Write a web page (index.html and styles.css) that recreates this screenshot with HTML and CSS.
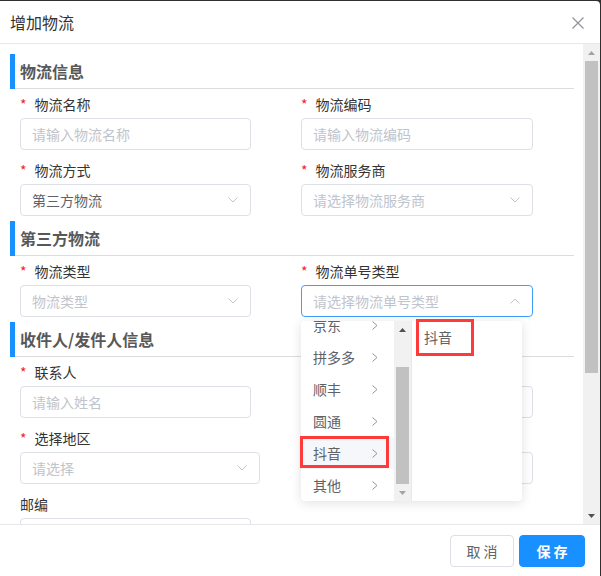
FILE: index.html
```html
<!DOCTYPE html>
<html lang="zh-CN">
<head>
<meta charset="utf-8">
<title>增加物流</title>
<link rel="stylesheet" href="styles.css">
</head>
<body>
<div class="modal">
  <div class="modal-header">
    <span class="modal-title">增加物流</span>
    <svg class="close" width="12" height="12" viewBox="0 0 12 12"><path d="M0.5 0.5L11.5 11.5M11.5 0.5L0.5 11.5" stroke="#909399" stroke-width="1.2" fill="none"/></svg>
  </div>
  <div class="modal-body">
    <div class="scroll-content">
      <section class="section">
        <div class="section-head"><span class="bar"></span><h3 class="section-title">物流信息</h3></div>
        <div class="row">
          <div class="item">
            <div class="label req">物流名称</div>
            <div class="input w230"><span class="ph">请输入物流名称</span></div>
          </div>
          <div class="item">
            <div class="label req">物流编码</div>
            <div class="input w231"><span class="ph">请输入物流编码</span></div>
          </div>
        </div>
        <div class="row">
          <div class="item">
            <div class="label req">物流方式</div>
            <div class="input select w230"><span class="val">第三方物流</span>
              <svg class="chev" width="10" height="6" viewBox="0 0 10 6"><path d="M0.5 0.5L5 5L9.5 0.5" stroke="#c0c4cc" fill="none"/></svg></div>
          </div>
          <div class="item">
            <div class="label req">物流服务商</div>
            <div class="input select w231"><span class="ph">请选择物流服务商</span>
              <svg class="chev" width="10" height="6" viewBox="0 0 10 6"><path d="M0.5 0.5L5 5L9.5 0.5" stroke="#c0c4cc" fill="none"/></svg></div>
          </div>
        </div>
      </section>
      <section class="section">
        <div class="section-head"><span class="bar"></span><h3 class="section-title">第三方物流</h3></div>
        <div class="row">
          <div class="item">
            <div class="label req">物流类型</div>
            <div class="input select w230"><span class="ph">物流类型</span>
              <svg class="chev" width="10" height="6" viewBox="0 0 10 6"><path d="M0.5 0.5L5 5L9.5 0.5" stroke="#c0c4cc" fill="none"/></svg></div>
          </div>
          <div class="item">
            <div class="label req">物流单号类型</div>
            <div class="input select focus w231"><span class="ph">请选择物流单号类型</span>
              <svg class="chev" width="10" height="6" viewBox="0 0 10 6"><path d="M0.5 5.5L5 1L9.5 5.5" stroke="#c0c4cc" fill="none"/></svg></div>
          </div>
        </div>
      </section>
      <section class="section">
        <div class="section-head"><span class="bar"></span><h3 class="section-title">收件人/发件人信息</h3></div>
        <div class="row">
          <div class="item">
            <div class="label req">联系人</div>
            <div class="input w230"><span class="ph">请输入姓名</span></div>
          </div>
          <div class="item">
            <div class="label"></div>
            <div class="input w231"></div>
          </div>
        </div>
        <div class="row">
          <div class="item">
            <div class="label req">选择地区</div>
            <div class="input select w239"><span class="ph">请选择</span>
              <svg class="chev" width="10" height="6" viewBox="0 0 10 6"><path d="M0.5 0.5L5 5L9.5 0.5" stroke="#c0c4cc" fill="none"/></svg></div>
          </div>
          <div class="item">
            <div class="label"></div>
            <div class="input w231"></div>
          </div>
        </div>
        <div class="row">
          <div class="item">
            <div class="label">邮编</div>
            <div class="input w230"></div>
          </div>
        </div>
      </section>
    </div>
    <div class="vscroll">
      <div class="sbtn"><svg width="7" height="4" viewBox="0 0 7 4"><path d="M0 4L3.5 0L7 4Z" fill="#a3a3a3"/></svg></div>
      <div class="strack"><div class="thumb main-thumb"></div></div>
      <div class="sbtn"><svg width="7" height="4" viewBox="0 0 7 4"><path d="M0 0L7 0L3.5 4Z" fill="#505050"/></svg></div>
    </div>
  </div>
  <div class="modal-footer">
    <button class="btn btn-default">取 消</button>
    <button class="btn btn-primary">保 存</button>
  </div>

  <div class="cascader">
    <div class="panel panel-first">
      <ul class="menu-list">
        <li class="menu-item">京东<svg class="arr" width="6" height="9" viewBox="0 0 6 9"><path d="M0.5 0.5L5 4.5L0.5 8.5" stroke="#909399" fill="none"/></svg></li>
        <li class="menu-item">拼多多<svg class="arr" width="6" height="9" viewBox="0 0 6 9"><path d="M0.5 0.5L5 4.5L0.5 8.5" stroke="#909399" fill="none"/></svg></li>
        <li class="menu-item">顺丰<svg class="arr" width="6" height="9" viewBox="0 0 6 9"><path d="M0.5 0.5L5 4.5L0.5 8.5" stroke="#909399" fill="none"/></svg></li>
        <li class="menu-item">圆通<svg class="arr" width="6" height="9" viewBox="0 0 6 9"><path d="M0.5 0.5L5 4.5L0.5 8.5" stroke="#909399" fill="none"/></svg></li>
        <li class="menu-item hover">抖音<svg class="arr" width="6" height="9" viewBox="0 0 6 9"><path d="M0.5 0.5L5 4.5L0.5 8.5" stroke="#909399" fill="none"/></svg></li>
        <li class="menu-item">其他<svg class="arr" width="6" height="9" viewBox="0 0 6 9"><path d="M0.5 0.5L5 4.5L0.5 8.5" stroke="#909399" fill="none"/></svg></li>
      </ul>
      <div class="vscroll menu-scroll">
        <div class="sbtn"><svg width="7" height="4" viewBox="0 0 7 4"><path d="M0 4L3.5 0L7 4Z" fill="#505050"/></svg></div>
        <div class="strack menu-track"><div class="thumb menu-thumb"></div></div>
        <div class="sbtn"><svg width="7" height="4" viewBox="0 0 7 4"><path d="M0 0L7 0L3.5 4Z" fill="#a3a3a3"/></svg></div>
      </div>
    </div>
    <div class="panel panel-second">
      <ul class="menu-list top">
        <li class="menu-item leaf">抖音</li>
      </ul>
    </div>
  </div>
  <div class="mark mark-a"></div>
  <div class="mark mark-b"></div>
</div>
</body>
</html>
```

FILE: styles.css
```css
* { box-sizing: border-box; }
html, body { margin: 0; padding: 0; }
body {
  background: #2f2f2f;
  width: 601px;
  height: 576px;
  overflow: hidden;
  font-family: "Noto Sans CJK SC", "Microsoft YaHei", sans-serif;
  font-size: 14px;
  color: #333;
}
.modal {
  position: relative;
  margin-top: 1px;
  width: 600px;
  height: 575px;
  background: #fff;
  border-top-right-radius: 4px;
  display: flex;
  flex-direction: column;
}
.modal-header {
  height: 43px;
  border-bottom: 1px solid #e8e8e8;
  display: flex;
  align-items: center;
  justify-content: space-between;
  padding: 0 16px 0 10px;
}
.modal-title {
  font-size: 16px;
  line-height: 22px;
  color: #333;
}
.close { display: block; margin-top: 1px; }
.modal-body {
  height: 480px;
  display: flex;
}
.scroll-content {
  width: 583px;
  height: 480px;
  overflow: hidden;
  padding-top: 10px;
}
.section-head {
  display: flex;
  margin: 0 9px 5px 10px;
  height: 35px;
}
.bar {
  width: 5px;
  background: #1890ff;
}
.section-title {
  flex: 1;
  margin: 0;
  padding-left: 5px;
  font-size: 16px;
  font-weight: bold;
  color: #585858;
  line-height: 34px;
  border-bottom: 1px solid #dcdcdc;
}
.row {
  display: flex;
  padding-left: 20px;
  margin-bottom: 10px;
}
.row:last-child { margin-bottom: 5px; }
.item { width: 281px; }
.label {
  height: 20px;
  line-height: 20px;
  margin-bottom: 4px;
  color: #333;
  font-size: 14px;
}
.label.req::before {
  content: "*";
  color: #f5222d;
  margin-right: 8px;
}
.input {
  height: 32px;
  border: 1px solid #dcdfe6;
  border-radius: 4px;
  padding: 0 11px;
  line-height: 30px;
  display: flex;
  align-items: center;
  justify-content: space-between;
}
.w230 { width: 231px; }
.w231 { width: 232px; }
.w239 { width: 240px; }
.input.focus { border-color: #409eff; }
.ph { color: #c0c4cc; }
.val { color: #606266; }
.chev { display: block; margin-right: 1px; }

.vscroll {
  width: 17px;
  background: #f1f1f1;
  display: flex;
  flex-direction: column;
}
.sbtn {
  height: 17px;
  display: flex;
  align-items: center;
  justify-content: center;
}
.sbtn svg { display: block; }
.strack { flex: 1; padding: 0 2px; }
.thumb { background: #c1c1c1; }
.main-thumb { height: 312px; }
.menu-track { display: flex; flex-direction: column; justify-content: flex-end; }
.menu-thumb { height: 117px; }

.modal-footer {
  flex: 1;
  border-top: 1px solid #e8e8e8;
  display: flex;
  justify-content: flex-end;
  align-items: flex-start;
  gap: 5px;
  padding: 10px 15px 0 0;
}
.btn {
  height: 32px;
  border-radius: 4px;
  font-family: inherit;
  font-size: 14px;
  padding: 0;
  line-height: 30px;
}
.btn-default {
  width: 64px;
  background: #fff;
  border: 1px solid #dcdfe6;
  color: #606266;
}
.btn-primary {
  width: 66px;
  background: #1890ff;
  border: 1px solid #1890ff;
  color: #fff;
  font-weight: bold;
}

.cascader {
  position: absolute;
  left: 301px;
  top: 320px;
  width: 221px;
  height: 180px;
  background: #fff;
  border-radius: 4px;
  box-shadow: 0 2px 12px rgba(0, 0, 0, 0.12);
  display: flex;
  overflow: hidden;
}
.panel { height: 180px; }
.panel-first {
  width: 111px;
  display: flex;
  border-right: 1px solid #e9e9e9;
}
.panel-second { flex: 1; }
.menu-list {
  list-style: none;
  margin: 0;
  padding: 0;
  width: 93px;
  height: 180px;
  overflow: hidden;
  display: flex;
  flex-direction: column;
  justify-content: flex-end;
}
.menu-list.top { justify-content: flex-start; width: auto; }
.menu-item {
  flex: none;
  height: 32px;
  line-height: 32px;
  padding: 0 16px 0 12px;
  color: #606266;
  display: flex;
  align-items: center;
  justify-content: space-between;
}
.menu-item.hover { background: #f5f7fa; }
.menu-item.leaf { justify-content: flex-start; }
.arr { display: block; }
.menu-scroll { height: 180px; }

.mark {
  position: absolute;
  border: 3px solid #ff3a3a;
}
.mark-a { left: 300px; top: 435px; width: 89px; height: 32px; }
.mark-b { left: 416px; top: 318px; width: 58px; height: 37px; }
```
